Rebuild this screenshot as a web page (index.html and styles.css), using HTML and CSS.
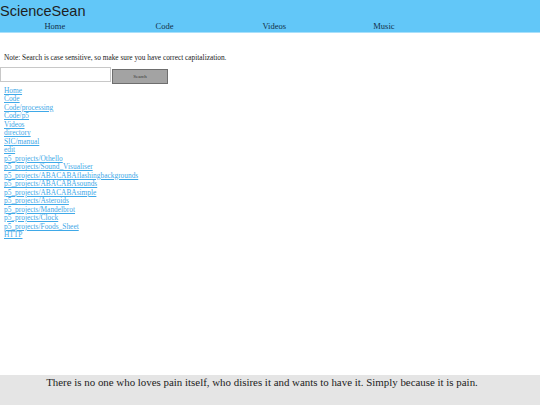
FILE: index.html
```html
<!DOCTYPE html>
<html>
<head>
<meta charset="utf-8">
<link rel="stylesheet" href="styles.css">
</head>
<body>
<div class="page">
  <header class="header">
    <div class="title">ScienceSean</div>
    <nav class="nav">
      <span class="nav-item">Home</span>
      <span class="nav-item">Code</span>
      <span class="nav-item">Videos</span>
      <span class="nav-item">Music</span>
    </nav>
  </header>
  <main class="main">
    <p class="note">Note: Search is case sensitive, so make sure you have correct capitalization.</p>
    <div class="search">
      <input class="search-input" type="text">
      <button class="search-btn">Search</button>
    </div>
    <ul class="links">
      <li><a href="#">Home</a></li>
      <li><a href="#">Code</a></li>
      <li><a href="#">Code/processing</a></li>
      <li><a href="#">Code/p5</a></li>
      <li><a href="#">Videos</a></li>
      <li><a href="#">directory</a></li>
      <li><a href="#">SIC/manual</a></li>
      <li><a href="#">edit</a></li>
      <li><a href="#">p5_projects/Othello</a></li>
      <li><a href="#">p5_projects/Sound_Visualiser</a></li>
      <li><a href="#">p5_projects/ABACABAflashingbackgrounds</a></li>
      <li><a href="#">p5_projects/ABACABAsounds</a></li>
      <li><a href="#">p5_projects/ABACABAsimple</a></li>
      <li><a href="#">p5_projects/Asteroids</a></li>
      <li><a href="#">p5_projects/Mandelbrot</a></li>
      <li><a href="#">p5_projects/Clock</a></li>
      <li><a href="#">p5_projects/Foods_Sheet</a></li>
      <li><a href="#">HTTP</a></li>
    </ul>
  </main>
  <footer class="footer">There is no one who loves pain itself, who disires it and wants to have it. Simply because it is pain.</footer>
</div>
</body>
</html>
```
FILE: styles.css
```css
html, body {
  margin: 0;
  padding: 0;
}
body {
  font-family: "Liberation Serif", serif;
  background: #ffffff;
}
.page {
  width: 540px;
  height: 405px;
  display: flex;
  flex-direction: column;
}
.header {
  background: #62c7f8;
  border-bottom: 1px solid #a9e0fb;
  height: 32px;
}
.title {
  font-family: "Liberation Sans", sans-serif;
  font-size: 14.5px;
  line-height: 20px;
  color: #1f1f1f;
  padding-top: 1px;
}
.nav {
  display: flex;
  height: 11px;
}
.nav-item {
  width: 109.7px;
  text-align: center;
  font-size: 8.5px;
  line-height: 11px;
  color: #12304a;
}
.main {
  flex: 1;
  padding-top: 20px;
}
.note {
  margin: 0 0 0 4px;
  font-size: 7.33px;
  line-height: 9px;
  color: #222;
}
.search {
  display: flex;
  align-items: flex-start;
  margin-top: 5px;
}
.search-input {
  box-sizing: border-box;
  width: 111px;
  height: 15px;
  margin: 0;
  border: 1px solid #c8c8c8;
  padding: 0;
}
.search-btn {
  box-sizing: border-box;
  width: 56px;
  height: 15px;
  margin: 2px 0 0 1px;
  padding: 0;
  background: #a3a3a3;
  border: 1px solid #6e6e6e;
  font-family: "Liberation Serif", serif;
  font-size: 5px;
  color: #333;
}
.links {
  list-style: none;
  margin: 3px 0 0 4px;
  padding: 0;
}
.links li {
  font-size: 7.4px;
  line-height: 8.47px;
}
.links a {
  color: #3fa9e8;
  text-underline-offset: 1px;
}
.footer {
  background: #e5e5e5;
  height: 30px;
  padding-right: 16px;
  text-align: center;
  font-size: 10.9px;
  line-height: 14px;
  color: #222;
}
```
